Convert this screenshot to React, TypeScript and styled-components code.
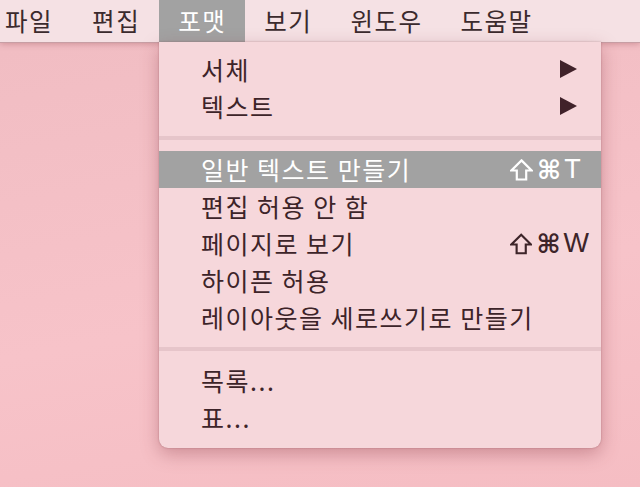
import React from 'react';
import styled, { createGlobalStyle } from 'styled-components';

const GlobalStyle = createGlobalStyle`
    html, body {
        margin: 0;
        padding: 0;
    }
    body {
        width: 640px;
        height: 487px;
        overflow: hidden;
        font-family: "Noto Sans CJK KR", "Noto Sans", sans-serif;
    }
`;

const Desktop = styled.div`
    width: 640px;
    height: 487px;
    background: linear-gradient(170deg, #f0bcc2 0%, #f7c3c9 60%, #f5bdc3 100%);
    display: flex;
    flex-direction: column;
`;

const MenuBar = styled.div`
    height: 43px;
    box-sizing: border-box;
    display: flex;
    align-items: stretch;
    background: #f5e1e4;
    border-bottom: 1px solid #c79ea4;
    box-shadow: 0 1px 6px rgba(140, 60, 70, 0.35);
    position: relative;
    z-index: 2;
`;

const BarItem = styled.div<{ $active?: boolean; $first?: boolean }>`
    display: flex;
    align-items: center;
    padding: 0 ${p => (p.$first ? '20px' : '19px')} 2px ${p => (p.$first ? '5px' : '19px')};
    font-size: 24.5px;
    letter-spacing: 1.5px;
    color: ${p => (p.$active ? '#ffffff' : '#3b2a2d')};
    background: ${p => (p.$active ? '#a2a2a2' : 'transparent')};
`;

const Stage = styled.div`
    flex: 1;
    display: flex;
    padding-left: 159px;
    position: relative;
    z-index: 3;
`;

const Menu = styled.div`
    width: 442px;
    height: 406px;
    margin-top: -1px;
    box-sizing: border-box;
    padding: 9px 0 11px;
    background: #f6d7db;
    border-radius: 0 0 9px 9px;
    box-shadow: 0 6px 18px rgba(130, 50, 60, 0.35), 0 0 2px rgba(110, 50, 60, 0.4);
    display: flex;
    flex-direction: column;
`;

const Row = styled.div<{ $active?: boolean }>`
    height: 37px;
    flex-shrink: 0;
    display: flex;
    align-items: center;
    padding: 0 12px 2px 42px;
    box-sizing: border-box;
    font-size: 25px;
    letter-spacing: 1.5px;
    color: ${p => (p.$active ? '#ffffff' : '#3d2429')};
    background: ${p => (p.$active ? '#a2a2a2' : 'transparent')};
`;

const Label = styled.span`
    flex: 1;
    white-space: nowrap;
`;

const Shortcut = styled.span`
    width: 79px;
    display: flex;
    align-items: center;
    gap: 3px;
    letter-spacing: 0;
    padding-top: 2px;
`;

const Cmd = styled.span`
    font-family: "DejaVu Sans", sans-serif;
    font-size: 26px;
    font-weight: bold;
    line-height: 1;
`;

const Key = styled.span`
    font-family: "Liberation Sans", Arial, sans-serif;
    font-size: 27px;
    line-height: 1;
`;

const Separator = styled.div`
    height: 4px;
    margin: 11px 0;
    flex-shrink: 0;
    background: #e6c5ca;
`;

const ArrowBox = styled.span`
    display: flex;
    margin-right: 12px;
`;

const Arrow = () => (
    <ArrowBox>
        <svg width="18" height="18" viewBox="0 0 18 18">
            <path d="M1 0 L18 9 L1 18 Z" fill="#40222a" />
        </svg>
    </ArrowBox>
);

const Shift = () => (
    <svg width="23" height="22" viewBox="0 0 23 22" style={{ marginRight: 1 }}>
        <path
            d="M11.5 1.4 L21.6 11.5 H16.2 V20.5 H6.8 V11.5 H1.4 Z"
            fill="none"
            stroke="currentColor"
            strokeWidth="2.2"
            strokeLinejoin="miter"
        />
    </svg>
);

const Keys = ({ k }: { k: string }) => (
    <Shortcut>
        <Shift />
        <Cmd>⌘</Cmd>
        <Key>{k}</Key>
    </Shortcut>
);

const barItems = ['파일', '편집', '포맷', '보기', '윈도우', '도움말'];

export default function App() {
    return (
        <>
            <GlobalStyle />
            <Desktop>
                <MenuBar>
                    {barItems.map((label, i) => (
                        <BarItem key={label} $first={i === 0} $active={label === '포맷'}>
                            {label}
                        </BarItem>
                    ))}
                </MenuBar>
                <Stage>
                    <Menu>
                        <Row><Label>서체</Label><Arrow /></Row>
                        <Row><Label>텍스트</Label><Arrow /></Row>
                        <Separator />
                        <Row $active><Label>일반 텍스트 만들기</Label><Keys k="T" /></Row>
                        <Row><Label>편집 허용 안 함</Label></Row>
                        <Row><Label>페이지로 보기</Label><Keys k="W" /></Row>
                        <Row><Label>하이픈 허용</Label></Row>
                        <Row><Label>레이아웃을 세로쓰기로 만들기</Label></Row>
                        <Separator />
                        <Row><Label>목록...</Label></Row>
                        <Row><Label>표...</Label></Row>
                    </Menu>
                </Stage>
            </Desktop>
        </>
    );
}
